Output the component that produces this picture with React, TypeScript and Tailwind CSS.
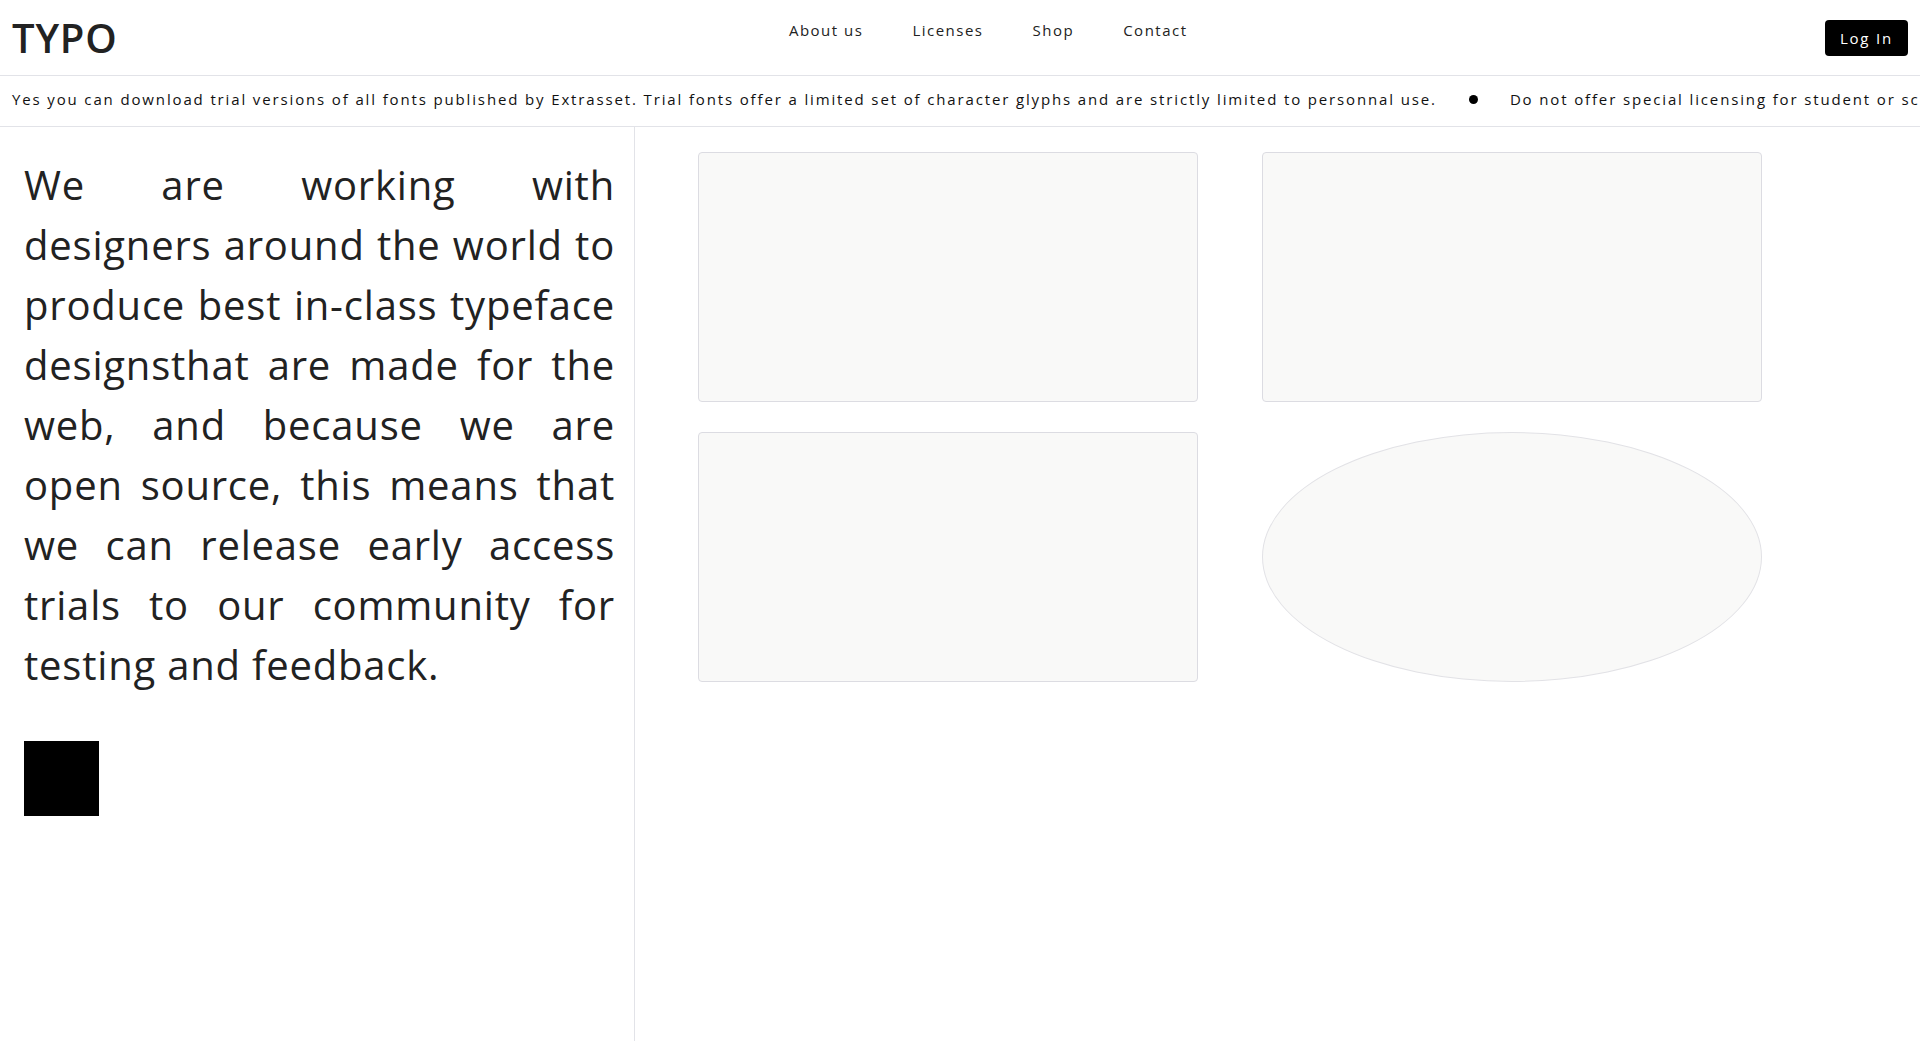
const FONT = "font-['Open_Sans','Noto_Sans',sans-serif]";

function Header() {
  return (
    <header className="flex h-[76px] items-start justify-between border-b border-[#e2e3e8] px-3">
      <div className="pt-[12px] text-[40px] font-semibold leading-[52px] tracking-[0.02em] text-[#222]">
        TYPO
      </div>
      <nav className="flex gap-[49px] pl-[34px] pt-[19px] text-[15px] tracking-[0.1em] text-[#222]">
        <a href="#">About us</a>
        <a href="#">Licenses</a>
        <a href="#">Shop</a>
        <a href="#">Contact</a>
      </nav>
      <div className="pt-[20px]">
        <button className="h-[36px] rounded-[4px] bg-black px-[15px] text-[15px] tracking-[0.12em] text-white">
          Log In
        </button>
      </div>
    </header>
  );
}

function Ticker() {
  return (
    <div className="flex h-[51px] items-center overflow-hidden whitespace-nowrap border-b border-[#e2e3e8] px-3 pb-[3px] text-[15px] tracking-[0.124em] text-[#111]">
      <span>
        Yes you can download trial versions of all fonts published by Extrasset. Trial fonts offer a limited set of
        character glyphs and are strictly limited to personnal use.
      </span>
      <span className="mx-[32px] inline-block h-[9px] w-[9px] shrink-0 rounded-full bg-black" />
      <span>Do not offer special licensing for student or school projects.</span>
    </div>
  );
}

export default function App() {
  return (
    <div className={`${FONT} min-h-[1041px] bg-white`}>
      <Header />
      <Ticker />
      <main className="flex min-h-[914px]">
        <section className="w-[635px] shrink-0 border-r border-[#e2e3e8] pl-6 pr-[19px] pt-[28px]">
          <p className="text-justify text-[40px] leading-[60px] tracking-[0.02em] text-[#222]">
            We are working with designers around the world to produce best in-class typeface designsthat are made
            for the web, and because we are open source, this means that we can release early access trials to our
            community for testing and feedback.
          </p>
          <div className="mt-[46px] h-[75px] w-[75px] bg-black" />
        </section>
        <section className="flex-1 pl-[63px] pt-[25px]">
          <div className="grid grid-cols-[500px_500px] gap-x-[64px] gap-y-[30px]">
            <div className="h-[250px] rounded-[4px] border border-[#dcdce2] bg-[#f9f9f8]" />
            <div className="h-[250px] rounded-[4px] border border-[#dcdce2] bg-[#f9f9f8]" />
            <div className="h-[250px] rounded-[4px] border border-[#dcdce2] bg-[#f9f9f8]" />
            <div className="h-[250px] rounded-[50%] border border-[#e2e2e6] bg-[#f9f9f8]" />
          </div>
        </section>
      </main>
    </div>
  );
}
